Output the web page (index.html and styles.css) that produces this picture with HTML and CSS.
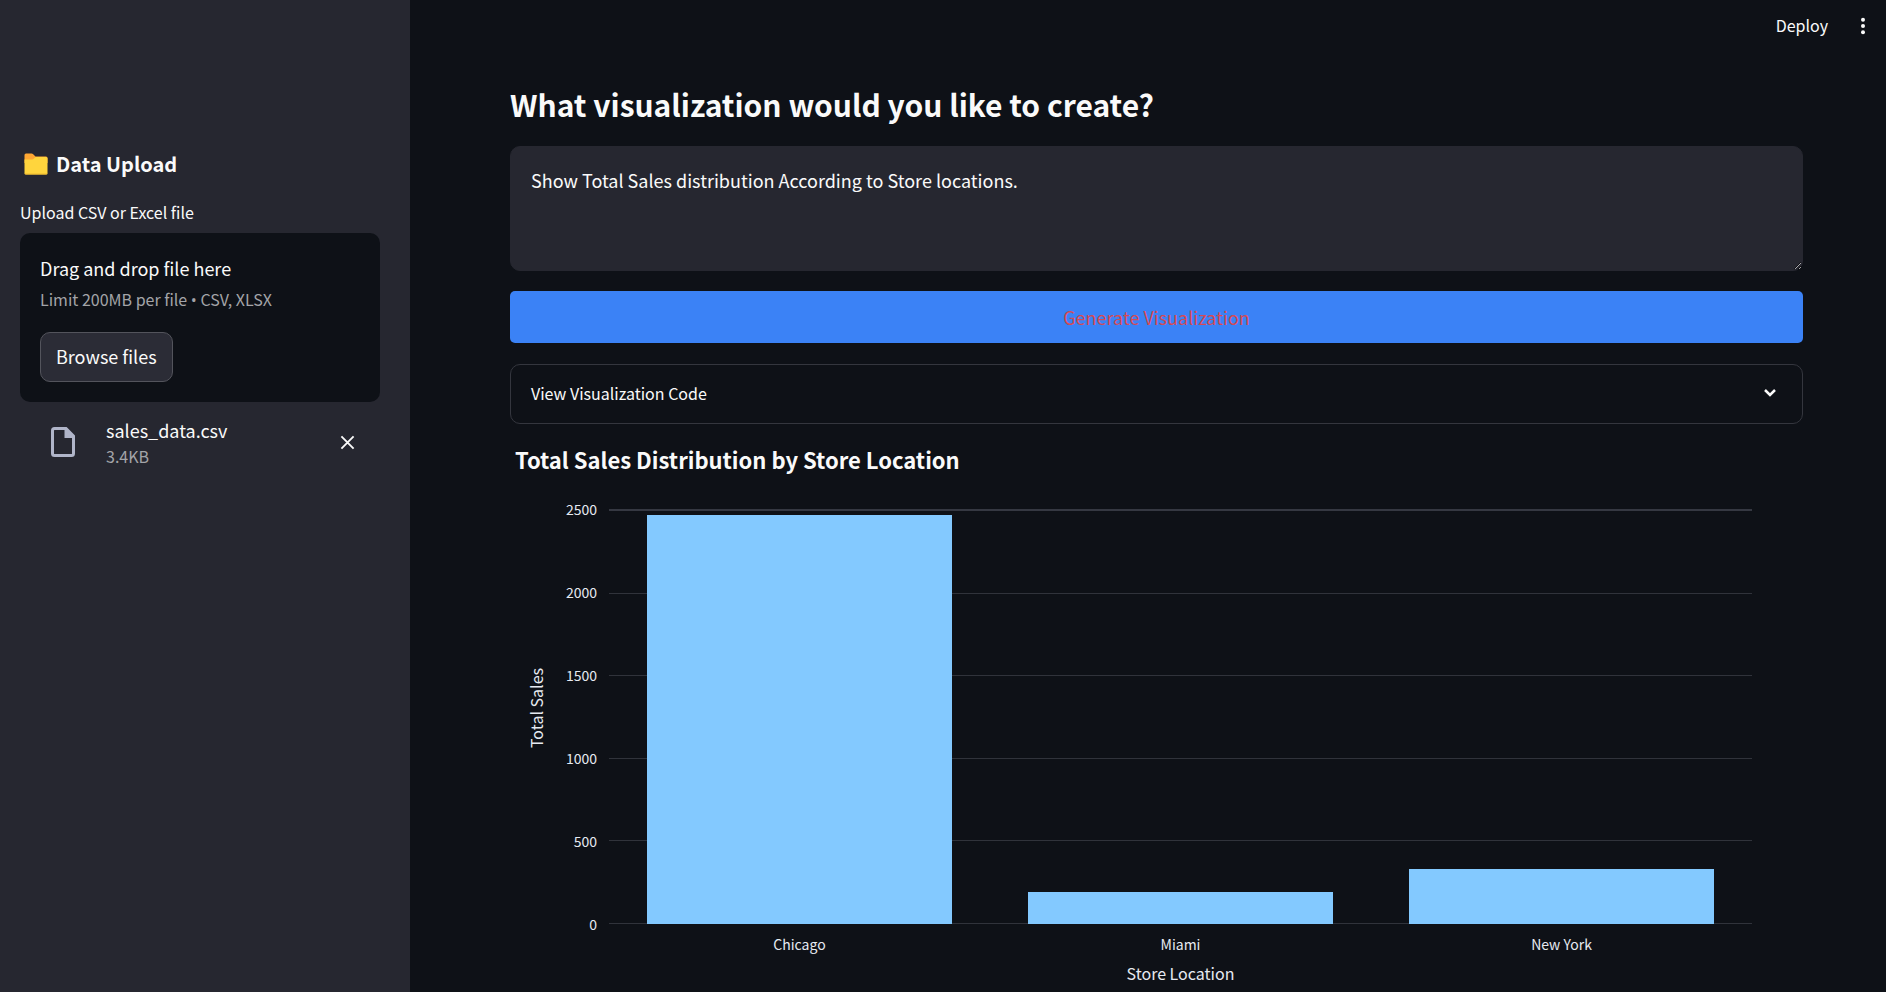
FILE: index.html
```html
<!DOCTYPE html>
<html lang="en">
<head>
<meta charset="utf-8">
<title>Data Visualization</title>
<link rel="stylesheet" href="styles.css">
</head>
<body>
<div class="app">
  <aside class="sidebar">
    <h2 class="sidebar-title">
      <svg class="folder" viewBox="0 0 24 22" aria-hidden="true">
        <path d="M0.500 2 Q0.500 0.500 2 0.500 H7.500 Q8.500 0.500 9.200 1.200 L11.500 3.500 H22 Q23.500 3.500 23.500 5 V10 H0.500 Z" fill="#ffa733"/>
        <path d="M0.500 6.500 H8 Q9 6.500 9.700 5.800 L11.500 4 H22 Q23.500 4 23.500 5.500 V20 Q23.500 21.500 22 21.500 H2 Q0.500 21.500 0.500 20 Z" fill="#ffd53d"/>
        <path d="M0.500 19.500 V20 Q0.500 21.500 2 21.500 H22 Q23.500 21.500 23.500 20 V19.500 Q23.500 20.600 22 20.600 H2 Q0.500 20.600 0.500 19.500 Z" fill="#efb92f"/>
      </svg>
      Data Upload
    </h2>
    <p class="upload-label" id="upload-label">Upload CSV or Excel file</p>
    <section class="dropzone" aria-labelledby="upload-label">
      <p class="drop-text">Drag and drop file here</p>
      <p class="muted">Limit 200MB per file <span class="dot">•</span> CSV, XLSX</p>
      <button class="browse" type="button">Browse files</button>
    </section>
    <div class="file">
      <svg class="file-icon" viewBox="0 0 24 30" aria-hidden="true">
        <path d="M3.500 1.500 H15 L22.500 9 V26.500 Q22.500 28.500 20.500 28.500 H3.500 Q1.500 28.500 1.500 26.500 V3.500 Q1.500 1.500 3.500 1.500 Z" fill="none" stroke="#b0b5c9" stroke-width="3"/>
        <path d="M13.500 1 H15.500 L23 8.500 V11 H13.500 Z" fill="#b0b5c9"/>
      </svg>
      <div class="file-info">
        <p class="file-name">sales_data.csv</p>
        <p class="muted">3.4KB</p>
      </div>
      <button class="remove" type="button" aria-label="Remove file">
        <svg viewBox="0 0 16 16" aria-hidden="true"><path d="M1.500 1.500 L14.500 14.500 M14.500 1.500 L1.500 14.500" stroke="#fafafa" stroke-width="2"/></svg>
      </button>
    </div>
  </aside>

  <div class="page">
    <header class="toolbar">
      <button class="deploy" type="button">Deploy</button>
      <button class="menu" type="button" aria-label="Main menu">
        <svg viewBox="0 0 6 18" aria-hidden="true"><g fill="#fafafa"><circle cx="3" cy="2.700" r="2"/><circle cx="3" cy="9" r="2"/><circle cx="3" cy="15.300" r="2"/></g></svg>
      </button>
    </header>
    <main class="content">
      <h1 class="title"><label for="prompt">What visualization would you like to create?</label></h1>
      <textarea class="prompt" id="prompt" spellcheck="false">Show Total Sales distribution According to Store locations.</textarea>
      <button class="generate" type="button">Generate Visualization</button>
      <details class="expander">
        <summary>
          <span>View Visualization Code</span>
          <svg class="chevron" viewBox="0 0 14 10" aria-hidden="true"><path d="M2 2 L7 7 L12 2" fill="none" stroke="#fafafa" stroke-width="2.500"/></svg>
        </summary>
      </details>
      <section class="chart" aria-labelledby="chart-title">
        <h2 class="chart-title" id="chart-title">Total Sales Distribution by Store Location</h2>
        <div class="y-title">Total Sales</div>
        <div class="ticks"><span>2500</span><span>2000</span><span>1500</span><span>1000</span><span>500</span><span>0</span></div>
        <div class="gridlines"><i class="strong"></i><i></i><i></i><i></i><i></i><i></i></div>
        <div class="bars">
          <div class="slot"><div class="bar" style="height:98.500%"></div></div>
          <div class="slot"><div class="bar" style="height:7.700%"></div></div>
          <div class="slot"><div class="bar" style="height:13.200%"></div></div>
        </div>
        <div class="categories"><span>Chicago</span><span>Miami</span><span>New York</span></div>
        <div class="x-title">Store Location</div>
      </section>
    </main>
  </div>
</div>
</body>
</html>
```
FILE: styles.css
```css
* { box-sizing: border-box; }

body {
  margin: 0;
  background: #0e1117;
  color: #fafafa;
  font-family: "Noto Sans CJK SC", "Noto Sans", sans-serif;
  font-size: 18px;
  line-height: 28px;
}

h1, h2, p { margin: 0; }

button {
  font: inherit;
  color: inherit;
  background: none;
  border: 0;
  padding: 0;
  cursor: pointer;
}

svg { display: block; }

.app {
  display: flex;
  min-height: 100vh;
}

/* Sidebar */
.sidebar {
  flex: 0 0 410px;
  background: #262730;
  padding: 148px 30px 0 20px;
}

.sidebar-title {
  display: flex;
  align-items: center;
  gap: 8px;
  padding-left: 4px;
  font-size: 20px;
  font-weight: 700;
  line-height: 32px;
}

.folder { width: 24px; height: 22px; }

.upload-label {
  margin-top: 20px;
  font-size: 16px;
  line-height: 24px;
}

.dropzone {
  margin-top: 9px;
  padding: 20px;
  border-radius: 10px;
  background: #0e1117;
}

.drop-text { line-height: 30px; }

.muted {
  font-size: 16px;
  color: #a3a4a8;
}

.drop-text + .muted { line-height: 32px; }

.dot { font-family: "Open Sans", sans-serif; line-height: 24px; }

.browse {
  display: block;
  margin-top: 17px;
  height: 50px;
  padding: 0 15px 2px;
  border: 1px solid #53545c;
  border-radius: 10px;
  background: #2b2c36;
}

.file {
  display: flex;
  align-items: center;
  margin-top: 14px;
  padding: 0 25px 0 31px;
}

.file-icon { width: 24px; height: 30px; }

.file-info {
  flex: 1;
  margin-left: 31px;
}

.file-info .muted { line-height: 24px; }

.remove svg { width: 15px; height: 15px; }

/* Main area */
.page {
  flex: 1;
  min-width: 0;
}

.toolbar {
  display: flex;
  justify-content: flex-end;
  align-items: center;
  gap: 32px;
  height: 52px;
  padding-right: 20px;
}

.deploy {
  padding-bottom: 2px;
  font-size: 16px;
}

.menu svg { width: 6px; height: 18px; }

.content {
  display: flex;
  flex-direction: column;
  padding: 28px 83px 0 100px;
}

.title {
  padding-top: 2px;
  font-size: 30px;
  font-weight: 700;
  line-height: 44px;
}

.prompt {
  display: block;
  width: 100%;
  height: 125px;
  margin-top: 20px;
  padding: 19px 20px;
  border: 1px solid #262730;
  border-radius: 10px;
  background: #262730;
  color: inherit;
  font: inherit;
  resize: vertical;
}

.generate {
  height: 52px;
  margin-top: 20px;
  border-radius: 5px;
  background: #3b82f6;
  color: #d54a55;
}

.expander {
  margin-top: 21px;
  border: 1px solid #34363e;
  border-radius: 10px;
}

.expander summary {
  display: flex;
  align-items: center;
  justify-content: space-between;
  height: 58px;
  padding: 0 25px 2px 20px;
  font-size: 16px;
  cursor: pointer;
}

.chevron { width: 14px; height: 10px; }

/* Chart */
.chart {
  display: grid;
  grid-template-columns: 38px 61px 1fr;
  grid-template-rows: auto 415px auto auto;
  margin-top: 19px;
  padding-right: 51px;
  color: #e6eaf1;
}

.chart-title {
  grid-column: 1 / -1;
  margin-bottom: 34px;
  padding-left: 5px;
  color: #fafafa;
  font-size: 22px;
  font-weight: 700;
  line-height: 32px;
}

.y-title {
  grid-column: 1;
  grid-row: 2;
  justify-self: end;
  align-self: center;
  margin-bottom: 16px;
  writing-mode: vertical-rl;
  transform: rotate(180deg);
  font-size: 16px;
  line-height: 24px;
}

.ticks {
  grid-column: 2;
  grid-row: 2;
  display: flex;
  flex-direction: column;
  justify-content: space-between;
  margin: -10px 0;
  padding-right: 12px;
  text-align: right;
  font-size: 14px;
  line-height: 20px;
}

.gridlines {
  grid-column: 3;
  grid-row: 2;
  display: flex;
  flex-direction: column;
  justify-content: space-between;
}

.gridlines i {
  height: 1px;
  background: #30333b;
}

.gridlines .strong {
  height: 2px;
  background: #353842;
}

.bars {
  grid-column: 3;
  grid-row: 2;
  display: flex;
}

.slot {
  flex: 1;
  display: flex;
  align-items: flex-end;
  justify-content: center;
}

.bar {
  width: 80%;
  background: #83c9ff;
}

.categories {
  grid-column: 3;
  display: flex;
  margin-top: 10px;
  font-size: 14px;
  line-height: 20px;
}

.categories span {
  flex: 1;
  text-align: center;
}

.x-title {
  grid-column: 3;
  margin-top: 7px;
  text-align: center;
  font-size: 16px;
  line-height: 24px;
}
```
